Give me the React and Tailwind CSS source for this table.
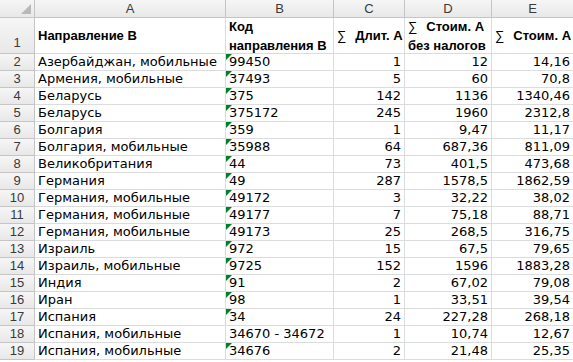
// App.jsx — spreadsheet view (Excel-like grid)
const rows = [
  ["Азербайджан, мобильные", "99450", "1", "12", "14,16"],
  ["Армения, мобильные", "37493", "5", "60", "70,8"],
  ["Беларусь", "375", "142", "1136", "1340,46"],
  ["Беларусь", "375172", "245", "1960", "2312,8"],
  ["Болгария", "359", "1", "9,47", "11,17"],
  ["Болгария, мобильные", "35988", "64", "687,36", "811,09"],
  ["Великобритания", "44", "73", "401,5", "473,68"],
  ["Германия", "49", "287", "1578,5", "1862,59"],
  ["Германия, мобильные", "49172", "3", "32,22", "38,02"],
  ["Германия, мобильные", "49177", "7", "75,18", "88,71"],
  ["Германия, мобильные", "49173", "25", "268,5", "316,75"],
  ["Израиль", "972", "15", "67,5", "79,65"],
  ["Израиль, мобильные", "9725", "152", "1596", "1883,28"],
  ["Индия", "91", "2", "67,02", "79,08"],
  ["Иран", "98", "1", "33,51", "39,54"],
  ["Испания", "34", "24", "227,28", "268,18"],
  ["Испания, мобильные", "34670 - 34672", "1", "10,74", "12,67"],
  ["Испания, мобильные", "34676", "2", "21,48", "25,35"],
];

const hdr =
  "bg-gradient-to-b from-[#f6f6f6] to-[#e8e8e8] border-r border-b border-[#c5c5c5] text-[#3a3a3a] font-['Liberation_Sans',sans-serif] text-[13px]";
const cell = "border-r border-b border-[#dadcdd] h-[17px] leading-[16px] px-[3px] whitespace-nowrap overflow-hidden";
const head = "border-r border-b border-[#dadcdd] px-[3px] flex items-center font-['Liberation_Sans',sans-serif] font-bold text-[13px] leading-[19px] whitespace-nowrap overflow-hidden";

function GreenMark() {
  return (
    <svg className="absolute left-0 top-0" width="6" height="6" viewBox="0 0 6 6">
      <polygon points="0,0 6,0 0,6" fill="#00802b" />
    </svg>
  );
}

export default function App() {
  return (
    <div className="w-[573px] h-[362px] overflow-hidden bg-white text-black font-['DejaVu_Sans',sans-serif] text-[13px]">
      <div className="grid grid-cols-[35px_191px_108px_71px_87px_82px]">
        {/* column letters */}
        <div className={`${hdr} h-[18px] relative`}>
          <svg className="absolute right-[3px] bottom-[3px]" width="10" height="10" viewBox="0 0 10 10">
            <polygon points="10,0 10,10 0,10" fill="#b9b9b9" />
          </svg>
        </div>
        {["A", "B", "C", "D", "E"].map((l) => (
          <div key={l} className={`${hdr} h-[18px] flex items-center justify-center`}>
            {l}
          </div>
        ))}

        {/* row 1 */}
        <div className={`${hdr} h-[36px] flex items-end justify-center pb-[1px]`}>1</div>
        <div className={`${head} h-[36px]`}>Направление В</div>
        <div className={`${head} h-[36px]`}>
          <div>
            Код
            <br />
            направления В
          </div>
        </div>
        <div className={`${head} h-[36px]`}>
          <span className="font-normal mr-[9px]">∑</span>Длит. А
        </div>
        <div className={`${head} h-[36px]`}>
          <div>
            <span className="font-normal mr-[9px]">∑</span>Стоим. А
            <br />
            без налогов
          </div>
        </div>
        <div className={`${head} h-[36px]`}>
          <span className="font-normal mr-[9px]">∑</span>Стоим. А
        </div>

        {rows.map((r, i) => (
          <div key={i} className="contents">
            <div className={`${hdr} h-[17px] leading-[16px] text-center`}>{i + 2}</div>
            <div className={cell}>{r[0]}</div>
            <div className={`${cell} relative`}>
              {r[1].includes("-") ? null : <GreenMark />}
              {r[1]}
            </div>
            <div className={`${cell} text-right`}>{r[2]}</div>
            <div className={`${cell} text-right`}>{r[3]}</div>
            <div className={`${cell} text-right`}>{r[4]}</div>
          </div>
        ))}
      </div>
    </div>
  );
}
